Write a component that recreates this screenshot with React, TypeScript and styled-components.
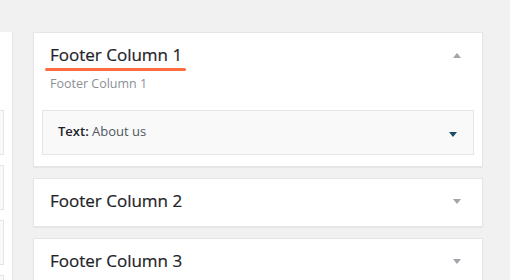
import styled, { createGlobalStyle } from 'styled-components';

const GlobalStyle = createGlobalStyle`
  html, body {
    margin: 0;
    padding: 0;
    background: #f1f1f1;
    font-family: "Open Sans", "Noto Sans", sans-serif;
  }
`;

const Page = styled.div`
  display: flex;
  align-items: flex-start;
  width: 510px;
  height: 280px;
  padding-top: 32px;
  box-sizing: border-box;
  overflow: hidden;
`;

// panneau de gauche, coupé par le bord de la fenêtre
const SidePanel = styled.div`
  display: flex;
  flex-direction: column;
  gap: 10px;
  width: 12px;
  height: 260px;
  padding-top: 78px;
  background: #fff;
  border-right: 1px solid #e5e5e5;
  overflow: hidden;
`;

const SideItem = styled.div`
  flex-shrink: 0;
  width: 3px;
  height: 43px;
  background: #f9f9f9;
  border: 1px solid #e5e5e5;
  border-left: none;
`;

const Column = styled.div`
  display: flex;
  flex-direction: column;
  gap: 11px;
  width: 450px;
  margin-left: 20px;
`;

const Card = styled.div`
  background: #fff;
  border: 1px solid #e5e5e5;
  box-shadow: 0 1px 1px rgba(0, 0, 0, 0.04);
`;

const CardHeader = styled.div`
  display: flex;
  align-items: center;
  justify-content: space-between;
  box-sizing: border-box;
  height: 47px;
  padding: 0 21px 3px 16px;
`;

const Title = styled.h3<{ $marked?: boolean }>`
  position: relative;
  margin: 0;
  font-size: 17px;
  font-weight: 400;
  line-height: 22px;
  color: #1d2327;
  -webkit-text-stroke: 0.2px #1d2327;

  &::after {
    content: '';
    display: ${(p) => (p.$marked ? 'block' : 'none')};
    position: absolute;
    left: -5px;
    right: -4px;
    bottom: -5px;
    height: 3px;
    border-radius: 2px;
    background: #ff6c3e;
  }
`;

const Arrow = styled.span<{ $up?: boolean; $color?: string }>`
  width: 0;
  height: 0;
  border-left: 4.5px solid transparent;
  border-right: 4.5px solid transparent;
  ${(p) =>
    p.$up
      ? `border-bottom: 5px solid ${p.$color || '#a0a5aa'};`
      : `border-top: 5px solid ${p.$color || '#a0a5aa'};`}
`;

const CardBody = styled.div`
  padding: 0 8px 11px;
`;

const Description = styled.p`
  margin: -5px 0 0 8px;
  font-size: 12.5px;
  line-height: 18px;
  color: #8c8f94;
`;

const Widget = styled.div`
  display: flex;
  align-items: center;
  justify-content: space-between;
  height: 43px;
  margin-top: 17px;
  padding: 0 16px 0 15px;
  background: #f9f9f9;
  border: 1px solid #e5e5e5;
`;

const WidgetTitle = styled.div`
  margin-top: -3px;
  font-size: 13px;
  font-weight: 600;
  color: #1d2327;
`;

const WidgetName = styled.span`
  font-weight: 400;
  color: #50575e;
`;

const WidgetArrow = styled(Arrow)`
  margin-top: 3px;
`;

const sections = ['Footer Column 1', 'Footer Column 2', 'Footer Column 3'];

const App = () => {
  return (
    <>
      <GlobalStyle />
      <Page>
        <SidePanel>
          <SideItem />
          <SideItem />
          <SideItem />
          <SideItem />
        </SidePanel>
        <Column>
          {sections.map((name, i) => (
            <Card key={name}>
              <CardHeader>
                <Title $marked={i === 0}>{name}</Title>
                <Arrow $up={i === 0} />
              </CardHeader>
              {i === 0 && (
                <CardBody>
                  <Description>{name}</Description>
                  <Widget>
                    <WidgetTitle>
                      Text: <WidgetName>About us</WidgetName>
                    </WidgetTitle>
                    <WidgetArrow $color="#1f4a66" />
                  </Widget>
                </CardBody>
              )}
            </Card>
          ))}
        </Column>
      </Page>
    </>
  );
};

export default App;
